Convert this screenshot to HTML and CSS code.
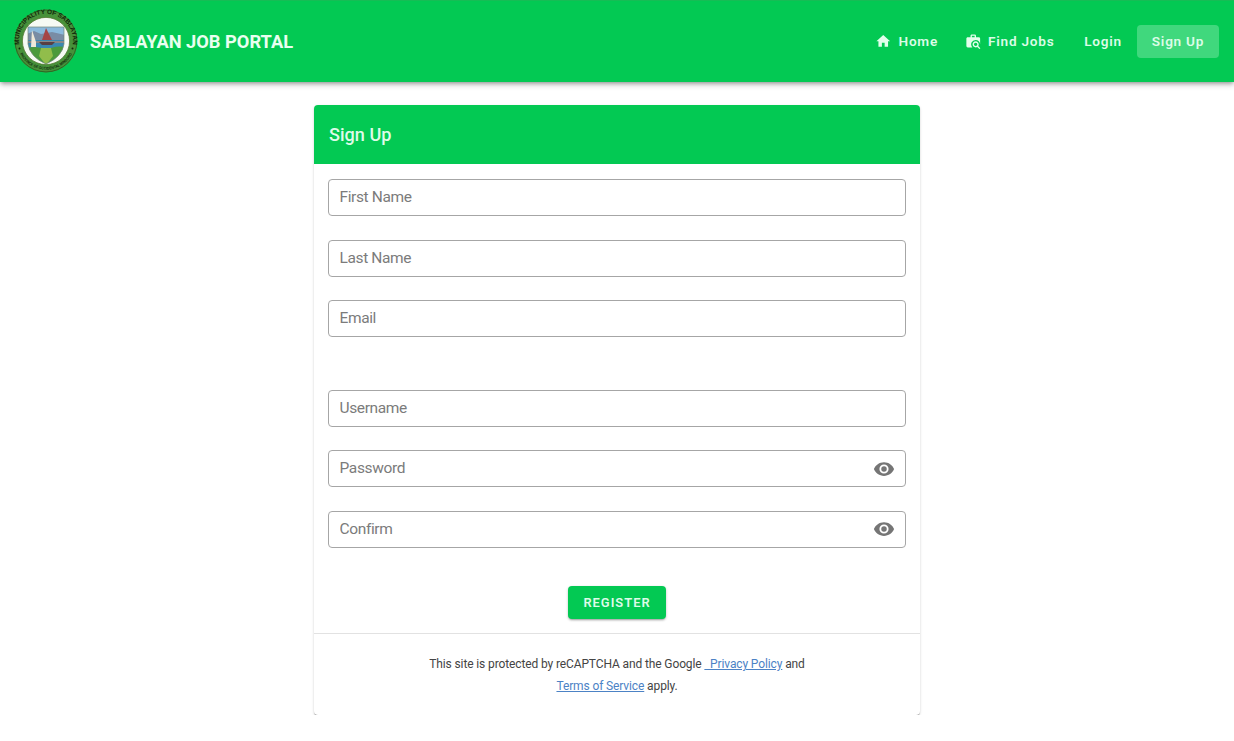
FILE: index.html
```html
<!DOCTYPE html>
<html lang="en">
<head>
<meta charset="utf-8">
<title>Sablayan Job Portal</title>
<link rel="stylesheet" href="styles.css">
</head>
<body>
<header class="bar">
  <svg class="seal" viewBox="0 0 64 64" role="img" aria-label="Municipality of Sablayan seal">
    <defs>
      <path id="arc-top" d="M7.600 43.500 A27 27 0 1 1 56.400 43.500"/>
      <path id="arc-bottom" d="M4.500 41.500 A29.300 29.300 0 0 0 59.500 41.500"/>
      <clipPath id="shield"><path d="M14 18 H50 V35 Q48 48 32 55 Q16 48 14 35Z"/></clipPath>
    </defs>
    <circle cx="32" cy="32" r="31.500" fill="#47913a"/>
    <circle cx="32" cy="32" r="30.900" fill="none" stroke="#2d6824" stroke-width="1"/>
    <circle cx="32" cy="32" r="23.600" fill="#f6faf4" stroke="#557b35" stroke-width=".8"/>
    <g clip-path="url(#shield)">
      <rect x="13" y="17" width="38" height="11" fill="#8ab9dc"/>
      <path d="M13 25 L20 22 L27 25 L38 23 L51 26 V32 H13Z" fill="#798ca4"/>
      <rect x="13" y="31" width="38" height="10" fill="#3987b0"/>
      <path d="M13 33 H51" stroke="#d58a5f" stroke-width="1.200"/>
      <path d="M13 39 Q24 36 32 41 Q41 36 51 38 V56 H13Z" fill="#4b9a3c"/>
      <path d="M27 39 H37 L39 47 L32 56 L25 47Z" fill="#91bd4b"/>
      <path d="M25 33 H41 L38 36 H28Z" fill="#583f43"/>
      <path d="M32 19 L28 31 H38Z" fill="#a54545"/>
      <path d="M18 21 L22 33 V38 H17Z" fill="#eee8d8"/>
    </g>
    <path d="M14 18 H50 V35 Q48 48 32 55 Q16 48 14 35Z" fill="none" stroke="#738779" stroke-width=".7"/>
    <circle cx="5.500" cy="39.500" r="1" fill="#10290b"/>
    <circle cx="58.500" cy="39.500" r="1" fill="#10290b"/>
    <text class="seal-top"><textPath href="#arc-top" startOffset="50%" textLength="92" lengthAdjust="spacingAndGlyphs">MUNICIPALITY OF SABLAYAN</textPath></text>
    <text class="seal-bottom"><textPath href="#arc-bottom" startOffset="50%" textLength="64" lengthAdjust="spacingAndGlyphs">PROVINCE OF OCCIDENTAL MINDORO</textPath></text>
  </svg>
  <div class="brand">SABLAYAN JOB PORTAL</div>
  <nav class="nav">
    <a class="nav-link home"><svg class="nav-icon" viewBox="0 0 24 24"><path d="M10 20v-6h4v6h5v-8h3L12 3 2 12h3v8z"/></svg>Home</a>
    <a class="nav-link jobs"><svg class="nav-icon" viewBox="0 0 24 24"><path d="M15.500 12C18 12 20 14 20 16.500C20 17.380 19.750 18.210 19.310 18.900L22.390 22L21 23.390L17.880 20.320C17.190 20.750 16.370 21 15.500 21C13 21 11 19 11 16.500C11 14 13 12 15.500 12M15.500 14A2.500 2.500 0 0 0 13 16.500A2.500 2.500 0 0 0 15.500 19A2.500 2.500 0 0 0 18 16.500A2.500 2.500 0 0 0 15.500 14M10 2H14A2 2 0 0 1 16 4V6H20A2 2 0 0 1 22 8V16.500A6.500 6.500 0 0 0 15.500 10A6.500 6.500 0 0 0 10.810 21H4A2 2 0 0 1 2 19V8C2 6.890 2.890 6 4 6H8V4C8 2.890 8.890 2 10 2M14 6V4H10V6H14Z"/></svg>Find Jobs</a>
    <a class="nav-link login">Login</a>
    <a class="nav-link active">Sign Up</a>
  </nav>
</header>
<main class="card">
  <h1 class="card-title">Sign Up</h1>
  <form class="form">
    <div class="fields">
      <div class="field"><input class="input" type="text" placeholder="First Name"></div>
      <div class="field"><input class="input" type="text" placeholder="Last Name"></div>
      <div class="field"><input class="input" type="text" placeholder="Email"></div>
    </div>
    <div class="fields account">
      <div class="field"><input class="input" type="text" placeholder="Username"></div>
      <div class="field"><input class="input" type="password" placeholder="Password"><svg class="eye" viewBox="0 0 24 24"><path d="M12 9a3 3 0 0 0 0 6 3 3 0 0 0 0-6m0 8a5 5 0 0 1 0-10 5 5 0 0 1 0 10m0-12.500C7 4.500 2.730 7.610 1 12c1.730 4.390 6 7.500 11 7.500s9.270-3.110 11-7.500c-1.730-4.390-6-7.500-11-7.500Z"/></svg></div>
      <div class="field"><input class="input" type="password" placeholder="Confirm"><svg class="eye" viewBox="0 0 24 24"><path d="M12 9a3 3 0 0 0 0 6 3 3 0 0 0 0-6m0 8a5 5 0 0 1 0-10 5 5 0 0 1 0 10m0-12.500C7 4.500 2.730 7.610 1 12c1.730 4.390 6 7.500 11 7.500s9.270-3.110 11-7.500c-1.730-4.390-6-7.500-11-7.500Z"/></svg></div>
    </div>
    <button class="register" type="button">REGISTER</button>
  </form>
  <footer class="legal">This site is protected by reCAPTCHA and the Google <a class="legal-link">&nbsp; Privacy Policy</a> and<br><a class="legal-link">Terms of Service</a> apply.</footer>
</main>
</body>
</html>
```
FILE: styles.css
```css
* { box-sizing: border-box; }
body {
  margin: 0;
  background: #fff;
  font-family: Roboto, "Liberation Sans", sans-serif;
  overflow: hidden;
}
.bar {
  display: flex;
  align-items: center;
  height: 82px;
  padding: 0 15px 0 14px;
  background: #03c953;
  box-shadow: inset 0 1px #16bd55, 0 2px 4px -1px rgba(0,0,0,.32), 0 3px 6px rgba(0,0,0,.18);
}
.seal { width: 64px; height: 64px; flex: none; overflow: visible; }
.seal-top, .seal-bottom {
  text-anchor: middle;
  font-family: "Liberation Sans", sans-serif;
  font-weight: 700;
  fill: #10290b;
}
.seal-top { font-size: 6.500px; }
.seal-bottom { font-size: 4px; }
.brand {
  margin-left: 12px;
  padding-top: 1px;
  color: #e9fff0;
  font-size: 18.250px;
  font-weight: 700;
  line-height: 24px;
  white-space: nowrap;
}
.nav { display: flex; margin-left: auto; }
.nav-link {
  display: flex;
  align-items: center;
  justify-content: center;
  height: 33px;
  border-radius: 4px;
  color: #dcfce7;
  font-size: 13.600px;
  font-weight: 600;
  letter-spacing: .760px;
  white-space: nowrap;
}
.nav-icon { width: 16.500px; height: 16.500px; margin-right: 7px; fill: #e2ffec; }
.home { width: 87px; }
.jobs { width: 119px; }
.login { width: 68px; }
.active { width: 82px; background: #40d87d; }
.card {
  width: 606px;
  height: 610px;
  margin: 23px auto 0;
  border-radius: 4px;
  background: #fff;
  box-shadow: 0 2px 1px -1px rgba(0,0,0,.3), 0 1px 1px rgba(0,0,0,.18), 0 1px 3px rgba(0,0,0,.14);
}
.card-title {
  height: 59px;
  margin: 0;
  padding: 0 15px;
  border-radius: 4px 4px 0 0;
  background: #03c953;
  color: #dffbe9;
  font-size: 18.100px;
  font-weight: 500;
  line-height: 59px;
}
.form {
  display: flex;
  flex-direction: column;
  align-items: center;
  height: 469px;
  padding: 15px 14px 0;
}
.fields { display: flex; flex-direction: column; gap: 23.500px; width: 100%; }
.account { gap: 23.400px; margin-top: 53px; }
.field {
  display: flex;
  align-items: center;
  height: 37px;
  padding: 0 10.500px 0 10.500px;
  border: 1px solid #a6a6a6;
  border-radius: 4px;
}
.input {
  flex: 1;
  min-width: 0;
  height: 33px;
  padding: 0 0 1px;
  border: 0;
  outline: 0;
  background: transparent;
  font: 400 15.500px/18px Roboto, "Liberation Sans", sans-serif;
  letter-spacing: -.370px;
}
.input::placeholder { color: #7b7b7b; opacity: 1; }
.eye { width: 22px; height: 22px; fill: #757575; }
.register {
  width: 98px;
  height: 33px;
  margin-top: 38px;
  padding: 0;
  border: 0;
  border-radius: 4px;
  background: #03c953;
  box-shadow: 0 2px 2px -1px rgba(0,0,0,.25), 0 1px 3px rgba(0,0,0,.2);
  color: #dffbe9;
  font: 600 12.900px/33px Roboto, "Liberation Sans", sans-serif;
  letter-spacing: 1px;
}
.legal {
  height: 82px;
  padding-top: 19px;
  border-top: 1px solid #e2e2e2;
  color: #444;
  font-size: 12px;
  letter-spacing: -.120px;
  line-height: 22px;
  text-align: center;
}
.legal-link { color: #4c82c5; text-decoration: underline; }
```
